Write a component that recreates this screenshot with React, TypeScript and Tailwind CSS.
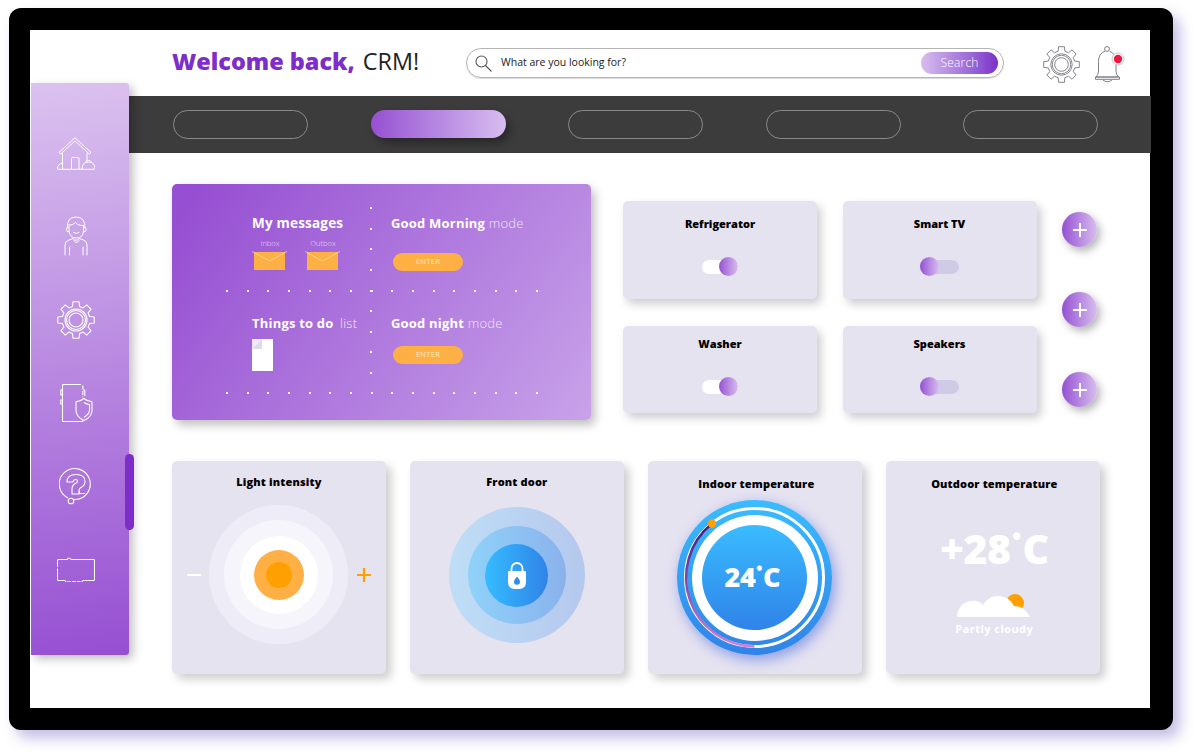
const gearPath = (cx: number, cy: number, outer: number, inner: number, teeth = 8) => {
  let d = "";
  for (let i = 0; i < teeth; i++) {
    const a = (i * 2 * Math.PI) / teeth - Math.PI / 2;
    const step = (2 * Math.PI) / teeth;
    const pts: [number, number][] = [
      [inner, a - step * 0.32],
      [outer, a - step * 0.21],
      [outer, a + step * 0.21],
      [inner, a + step * 0.32],
    ];
    pts.forEach(([r, t], j) => {
      const x = (cx + r * Math.cos(t)).toFixed(2);
      const y = (cy + r * Math.sin(t)).toFixed(2);
      d += `${i === 0 && j === 0 ? "M" : "L"}${x} ${y} `;
    });
  }
  return d + "Z";
};

const GearIcon = ({ size, color, width = 1.1 }: { size: number; color: string; width?: number }) => (
  <svg width={size} height={size} viewBox="0 0 38 38" fill="none" stroke={color} strokeWidth={width} strokeLinejoin="round">
    <path d={gearPath(19, 19, 18.5, 14)} />
    <circle cx="19" cy="19" r="11" />
    <circle cx="19" cy="19" r="9.500" />
    <circle cx="19" cy="19" r="7" />
  </svg>
);

const HouseIcon = () => (
  <svg width="38" height="33" viewBox="0 0 38 33" fill="none" stroke="white" strokeWidth="1" strokeLinejoin="round">
    <path d="M2 15.500 18 .7l16 14.800-1.600 1.600L18 4 3.600 17.100Z" />
    <path d="M5.500 16v16M30 16v8" />
    <path d="M14.500 32V21.500q0-1 1-1h5.500q1 0 1 1V32" />
    <path d="M.5 32.300h37" />
    <path d="M.5 32q0-5 5-6M25 32q0-7 6.500-7t6.500 7" />
    <path d="M28 25.500q3.500-4 7 0" />
  </svg>
);

const PersonIcon = () => (
  <svg width="24" height="40" viewBox="0 0 24 40" fill="none" stroke="white" strokeWidth="1" strokeLinecap="round">
    <path d="M3.500 12Q2.500 1 12 1t9 11" />
    <path d="M4.500 9q4 1 7-2.500 3 3.500 8 3" />
    <path d="M5 10v5q1 7 7.500 7t7-7v-5" />
    <path d="M3 11.500q-1.500 1.500 0 4l2 .5M21.500 11.500q1.500 1.500 0 4l-2 .5" />
    <path d="M9.500 16.500q3 2 5.500 0" />
    <path d="M1 39V29q0-4 4-5l4-1.500q3 3.500 6.500 0l4 1.500q3.500 1 3.500 5v10" />
    <path d="M5.500 39v-8M19 39v-8M10 24.500l2.500 2.500 2.500-2.500" />
  </svg>
);

const PhoneShieldIcon = () => (
  <svg width="33" height="38" viewBox="0 0 33 38" fill="none" stroke="white" strokeWidth="1.100" strokeLinejoin="round">
    <path d="M21 .5H3.500q-1 0-1 1V36.500q0 1 1 1h19q.5 0 .5-1" />
    <path d="M22.800 1.500v12" strokeDasharray="4 1.500" />
    <path d="M2.500 6H.8v5h1.700M2.500 16H.8v4h1.700M23 6h1.800v6" />
    <path d="M24 14.500q3.500 3 8 3.200V26q0 7-8 10.500Q16 33 16 26v-8.300q4.500-.2 8-3.200Z" />
    <path d="M24 18.500q2.500 1.800 5.500 2V26q0 4-5.500 7.500" />
  </svg>
);

const QuestionIcon = () => (
  <svg width="34" height="39" viewBox="0 0 34 39" fill="none" stroke="white" strokeWidth="1.100" strokeLinejoin="round">
    <path d="M9 31A15.500 15.500 0 1 1 14.500 32.500" />
    <path d="M8 15q0-7.500 9-7.500t9 7q0 4-4 6-2 1-2 3V27h-7v-5q0-4 3.500-5.500 2-1 2-2.500 0-1.500-2-1.500t-2.500 2.500Z" />
    <path d="M20.500 24v2.500h5.500" />
    <circle cx="12" cy="34" r="2.800" />
  </svg>
);

const BoxIcon = () => (
  <svg width="38" height="25" viewBox="0 0 38 25" fill="none" stroke="white" strokeWidth="1.100" strokeLinejoin="round">
    <path d="M14 2.500h22.500q1 0 1 1v19q0 1-1 1h-9" />
    <path d="M10 2.500H1.500q-1 0-1 1v6M.5 12v10.500q0 1 1 1h4.500" strokeLinecap="round" />
    <path d="M6 2.500h4q2-3 4 0" />
    <path d="M6 23.500h2l.8 1.200h16.400l.8-1.200h1.500" strokeDasharray="4 .8" />
  </svg>
);

const BellIcon = () => (
  <svg width="31" height="37" viewBox="0 0 31 37" fill="none" stroke="#7f7f8a" strokeWidth="1">
    <circle cx="12" cy="3" r="2.400" />
    <path d="M10 5.200Q3.500 7.500 3.500 15.500V25q0 3.500-2.500 6h22.500q-2.500-2.500-2.500-6V15.500q0-8-6.500-10.300" />
    <path d="M.5 31h24v2.300H.5Z" />
    <path d="M8 34q4 3.500 9 0" />
    <circle cx="23" cy="13" r="6" fill="white" stroke="#c5c5cc" />
    <circle cx="23" cy="13" r="4.200" fill="#f0173f" stroke="none" />
  </svg>
);

const Envelope = () => (
  <svg width="36" height="20" viewBox="0 0 36 20" fill="none" className="overflow-visible">
    <rect x="2" y="1" width="31" height="18" fill="#ffb045" />
    <path d="M0 .5 17.500 10 35 .5" stroke="#ffe0a8" strokeWidth=".7" />
  </svg>
);

const Doc = () => (
  <svg width="21" height="32" viewBox="0 0 21 32">
    <path d="M0 0h21v32H0Z" fill="white" />
    <path d="M10 0 0 10h10Z" fill="#dcdce6" />
    <path d="M0 0h10L0 10Z" fill="#efe8f8" />
  </svg>
);

const Dot = () => <span className="block w-[2px] h-[2px] bg-white" />;

const DotRow = ({ top }: { top: string }) => (
  <div className={`absolute left-[54px] w-[312px] flex justify-between ${top}`}>
    {Array.from({ length: 16 }).map((_, i) => (
      <Dot key={i} />
    ))}
  </div>
);

const Toggle = ({ on }: { on?: boolean }) => (
  <div className={`flex items-center rounded-full h-[14px] ${on ? "w-[36px] bg-white justify-end" : "w-[39px] bg-[#cfcae6] justify-start"}`}>
    <span className="block w-[19px] h-[19px] rounded-full bg-gradient-to-r from-[#964fd2] to-[#d8bdee]" />
  </div>
);

const DeviceCard = ({ title, on, box }: { title: string; on?: boolean; box: string }) => (
  <div className={`${box} rounded-[5px] bg-[#e6e3f1] shadow-[4px_5px_10px_rgba(0,0,0,0.2)] flex flex-col items-center`}>
    <h3 className="text-[11px] leading-[18px] font-extrabold text-black">{title}</h3>
    <div className="mt-[24px] h-[19px] flex items-center">
      <Toggle on={on} />
    </div>
  </div>
);

const PlusButton = () => (
  <button className="w-[35px] h-[35px] rounded-full bg-gradient-to-r from-[#964fd2] to-[#d8bdee] shadow-[3px_4px_8px_rgba(0,0,0,0.3)] flex items-center justify-center">
    <svg width="14" height="14" viewBox="0 0 14 14" stroke="white" strokeWidth="2">
      <path d="M7 0v14M0 7h14" />
    </svg>
  </button>
);

const TileCard = ({ title, titleTop, children }: { title: string; titleTop: string; children: React.ReactNode }) => (
  <div className={`w-[213.700px] h-[213px] rounded-[5px] bg-[#e6e3f1] shadow-[5px_5px_10px_rgba(0,0,0,0.2)] flex flex-col items-center ${titleTop}`}>
    <h3 className="text-[11px] leading-[18px] font-extrabold tracking-[0.15px] text-black">{title}</h3>
    {children}
  </div>
);

const Thermostat = () => (
  <div className="relative mt-[7px] -ml-[3px] w-[155px] h-[155px] rounded-full bg-gradient-to-b from-[#3bbcff] to-[#3083e8] shadow-[3px_5px_14px_rgba(48,90,220,0.5)] flex items-center justify-center">
    <svg width="155" height="155" viewBox="0 0 155 155" fill="none" className="absolute inset-0">
      <defs>
        <linearGradient id="arc" x1="0" y1="24" x2="0" y2="146" gradientUnits="userSpaceOnUse">
          <stop offset="0" stopColor="#45187c" />
          <stop offset="1" stopColor="#d07ed6" />
        </linearGradient>
      </defs>
      <circle cx="77.500" cy="77.500" r="69" stroke="white" strokeWidth="3" />
      <path d="M34.800 23.800A69 69 0 0 0 77.500 146.500" stroke="url(#arc)" strokeWidth="2.500" />
      <circle cx="35" cy="23.500" r="4.200" fill="#ff9f00" />
    </svg>
    <div className="w-[126px] h-[126px] rounded-full bg-white flex items-center justify-center">
      <div className="w-[105px] h-[105px] rounded-full bg-gradient-to-b from-[#3bbcff] to-[#3083e8] flex items-center justify-center">
        <span className="text-[27px] leading-none font-extrabold tracking-[-0.5px] text-white -ml-[5px] -mt-[2px]">
          24<span className="[-webkit-text-stroke:1.200px_white] text-[10px] align-[13px] mx-[2px]">°</span>C
        </span>
      </div>
    </div>
  </div>
);

export default function App() {
  const navItems = [false, true, false, false, false];
  return (
    <div className="h-[754px] bg-white pl-[9px] pt-[8px] overflow-hidden font-['Open_Sans',sans-serif]">
      <div className="w-[1164px] h-[722px] rounded-[12px] bg-black pl-[21px] pt-[22px] shadow-[7px_8px_14px_rgba(110,90,190,0.4)]">
        <div className="w-[1120px] h-[678px] bg-white flex">
          {/* Sidebar */}
          <aside className="relative z-10 ml-px mt-[53px] w-[98px] h-[572px] rounded-r-[3px] bg-[linear-gradient(172deg,#dbc2ef,#964fd2)] shadow-[4px_4px_10px_rgba(0,0,0,0.25)] flex flex-col items-center gap-[43.400px] pt-[50px] pr-[8px]">
            <div className="h-[40px] flex items-center"><HouseIcon /></div>
            <div className="h-[40px] flex items-center"><PersonIcon /></div>
            <div className="h-[40px] flex items-center"><GearIcon size={38} color="white" /></div>
            <div className="h-[40px] flex items-center"><PhoneShieldIcon /></div>
            <div className="h-[40px] flex items-center"><QuestionIcon /></div>
            <div className="h-[40px] flex items-center"><BoxIcon /></div>
            <span className="absolute left-[94px] top-[371px] w-[9px] h-[76px] rounded-[5px] bg-[#7d2ec8]" />
          </aside>

          {/* Main column */}
          <main className="w-[1021px]">
            <header className="h-[66px] flex items-center pl-[43px]">
              <h1 className="w-[294px] text-[23.400px] leading-none text-[#222] -mt-[2px]">
                <span className="font-extrabold text-[#7d2ec8]">Welcome back,</span> <span className="ml-[2px]">CRM!</span>
              </h1>
              <div className="w-[538px] h-[30px] rounded-full border border-[#b5b5b5] shadow-[0_1px_1px_rgba(0,0,0,0.15)] flex items-center pl-[8px] pr-[5px]">
                <svg width="17" height="17" viewBox="0 0 17 17" fill="none" stroke="#555" strokeWidth="1.100">
                  <circle cx="6.500" cy="6.500" r="5.500" />
                  <path d="m10.500 10.500 6 6" />
                </svg>
                <span className="ml-[9px] text-[10.500px] text-[#222] flex-1">What are you looking for?</span>
                <button className="w-[77px] h-[22px] rounded-full bg-gradient-to-r from-[#d8bdee] to-[#7d2ec8] text-white text-[12px] font-light tracking-[0.2px]">Search</button>
              </div>
              <div className="ml-[39px] mt-[2px]"><GearIcon size={37} color="#7f7f8a" width={1} /></div>
              <div className="ml-[15px] mt-[2px]"><BellIcon /></div>
            </header>

            <nav className="w-[1022px] h-[57px] bg-[#3c3c3c] flex items-center gap-[62.600px] pl-[44px] pb-[1px]">
              {navItems.map((active, i) =>
                active ? (
                  <button key={i} className="w-[135px] h-[28px] rounded-full bg-gradient-to-r from-[#964fd2] to-[#d8bdee] shadow-[4px_5px_8px_rgba(0,0,0,0.35)]" />
                ) : (
                  <button key={i} className="w-[135px] h-[29px] rounded-full border border-[#8a8a8a]" />
                )
              )}
            </nav>

            <div className="pl-[43px]">
              <div className="flex pt-[31px]">
                {/* Purple panel */}
                <section className="relative w-[419px] h-[236px] rounded-[5px] bg-[linear-gradient(125deg,#964fd2_5%,#c8a2e9)] shadow-[4px_5px_10px_rgba(0,0,0,0.25)] pl-[80px] pt-[30px] text-white">
                  <div className="grid grid-cols-[139px_1fr] grid-rows-[100px_auto]">
                    <div>
                      <p className="text-[13.500px] leading-[19px] font-bold tracking-[0.2px]">My messages</p>
                      <div className="flex gap-[17px] mt-[5px]">
                        <div className="w-[36px] flex flex-col items-center">
                          <span className="text-[7.500px] leading-[11px] font-light text-[#e9dcf7]">Inbox</span>
                          <div className="mt-[2px]"><Envelope /></div>
                        </div>
                        <div className="w-[36px] flex flex-col items-center">
                          <span className="text-[7.500px] leading-[11px] font-light text-[#e9dcf7]">Outbox</span>
                          <div className="mt-[2px]"><Envelope /></div>
                        </div>
                      </div>
                    </div>
                    <div>
                      <p className="text-[13px] leading-[19px] font-bold tracking-[0.2px]">Good Morning <span className="font-light text-[#efe6f9]">mode</span></p>
                      <button className="block mt-[20px] ml-[2px] w-[70px] h-[18px] rounded-full bg-[#ffb045] text-[7.500px] tracking-[0.3px] font-normal text-[#ffeacb]">ENTER</button>
                    </div>
                    <div>
                      <p className="text-[13px] leading-[19px] font-bold tracking-[0.2px]">Things to do <span className="font-light ml-[3px] text-[#f3ecfb]">list</span></p>
                      <div className="mt-[6px]"><Doc /></div>
                    </div>
                    <div>
                      <p className="text-[13px] leading-[19px] font-bold tracking-[0.2px]">Good night <span className="font-light text-[#efe6f9]">mode</span></p>
                      <button className="block mt-[13px] ml-[2px] w-[70px] h-[18px] rounded-full bg-[#ffb045] text-[7.500px] tracking-[0.3px] font-normal text-[#ffeacb]">ENTER</button>
                    </div>
                  </div>
                  <DotRow top="top-[106px]" />
                  <DotRow top="top-[208px]" />
                  <div className="absolute left-[198px] top-[23px] h-[167px] flex flex-col justify-between">
                    {Array.from({ length: 9 }).map((_, i) => (
                      <Dot key={i} />
                    ))}
                  </div>
                </section>

                {/* Devices */}
                <div className="ml-[32px] mt-[17px] grid grid-cols-[194px_194px] gap-x-[25.500px] gap-y-[27px] h-fit">
                  <DeviceCard title="Refrigerator" on box="h-[98px] pt-[14px]" />
                  <DeviceCard title="Smart TV" box="h-[98px] pt-[14px]" />
                  <DeviceCard title="Washer" on box="h-[87px] pt-[9px]" />
                  <DeviceCard title="Speakers" box="h-[87px] pt-[9px]" />
                </div>

                <div className="ml-[25.500px] mt-[28px] flex flex-col gap-[45px] h-fit">
                  <PlusButton />
                  <PlusButton />
                  <PlusButton />
                </div>
              </div>

              {/* Bottom tiles */}
              <div className="flex gap-[24.300px] mt-[41px]">
                <TileCard title="Light intensity" titleTop="pt-[12px]">
                  <div className="mt-[14px] flex items-center gap-[8.500px]">
                    <span className="block w-[14px] h-[2px] bg-white" />
                    <div className="w-[139px] h-[139px] rounded-full bg-[#eeecf6] flex items-center justify-center">
                      <div className="w-[109px] h-[109px] rounded-full bg-[#f6f5fb] flex items-center justify-center">
                        <div className="w-[78px] h-[78px] rounded-full bg-white flex items-center justify-center">
                          <div className="w-[50px] h-[50px] rounded-full bg-[#ffb045] flex items-center justify-center">
                            <div className="w-[26px] h-[26px] rounded-full bg-[#ff9f00]" />
                          </div>
                        </div>
                      </div>
                    </div>
                    <svg width="14" height="14" viewBox="0 0 14 14" stroke="#ff9f00" strokeWidth="2.200">
                      <path d="M7 0v14M0 7h14" />
                    </svg>
                  </div>
                </TileCard>

                <TileCard title="Front door" titleTop="pt-[12px]">
                  <div className="mt-[16px] w-[136px] h-[136px] rounded-full bg-gradient-to-r from-[#bfdef6] to-[#b5c8ee] flex items-center justify-center">
                    <div className="w-[98px] h-[98px] rounded-full bg-gradient-to-r from-[#8fd2f9] to-[#8ab2ec] flex items-center justify-center">
                      <div className="w-[63px] h-[63px] rounded-full bg-gradient-to-r from-[#36bcff] to-[#3083e8] flex items-center justify-center">
                        <svg width="18" height="27" viewBox="0 0 18 27" fill="none">
                          <path d="M3.500 10V6.500a5.500 5.500 0 0 1 11 0V10" stroke="white" strokeWidth="1.800" />
                          <path d="M0 9h18v11q0 7-7 7H7q-7 0-7-7Z" fill="white" />
                          <path d="M9 14.500q3 3.500 3 5.200a3 3 0 0 1-6 0q0-1.700 3-5.200Z" fill="#2f8fe8" />
                        </svg>
                      </div>
                    </div>
                  </div>
                </TileCard>

                <TileCard title="Indoor temperature" titleTop="pt-[14px] pl-[3px]">
                  <Thermostat />
                </TileCard>

                <TileCard title="Outdoor temperature" titleTop="pt-[14px] pl-[3px]">
                  <p className="mt-[22px] text-[41px] leading-[48px] font-extrabold tracking-[-0.5px] text-white">
                    +28<span className="[-webkit-text-stroke:1.800px_white] text-[15px] align-[19px] mx-[3px]">°</span>C
                  </p>
                  <svg width="74" height="26" viewBox="0 0 74 26" className="mt-[20px]">
                    <circle cx="58" cy="11" r="9" fill="#ff9f00" />
                    <path d="M0 25Q1 11 14 9q8-1 12 4 5-9 15-9 11 0 16 10 10 0 16 11Z" fill="white" />
                  </svg>
                  <p className="mt-[3px] text-[11px] leading-[16px] font-bold tracking-[0.45px] text-white">Partly cloudy</p>
                </TileCard>
              </div>
            </div>
          </main>
        </div>
      </div>
    </div>
  );
}
